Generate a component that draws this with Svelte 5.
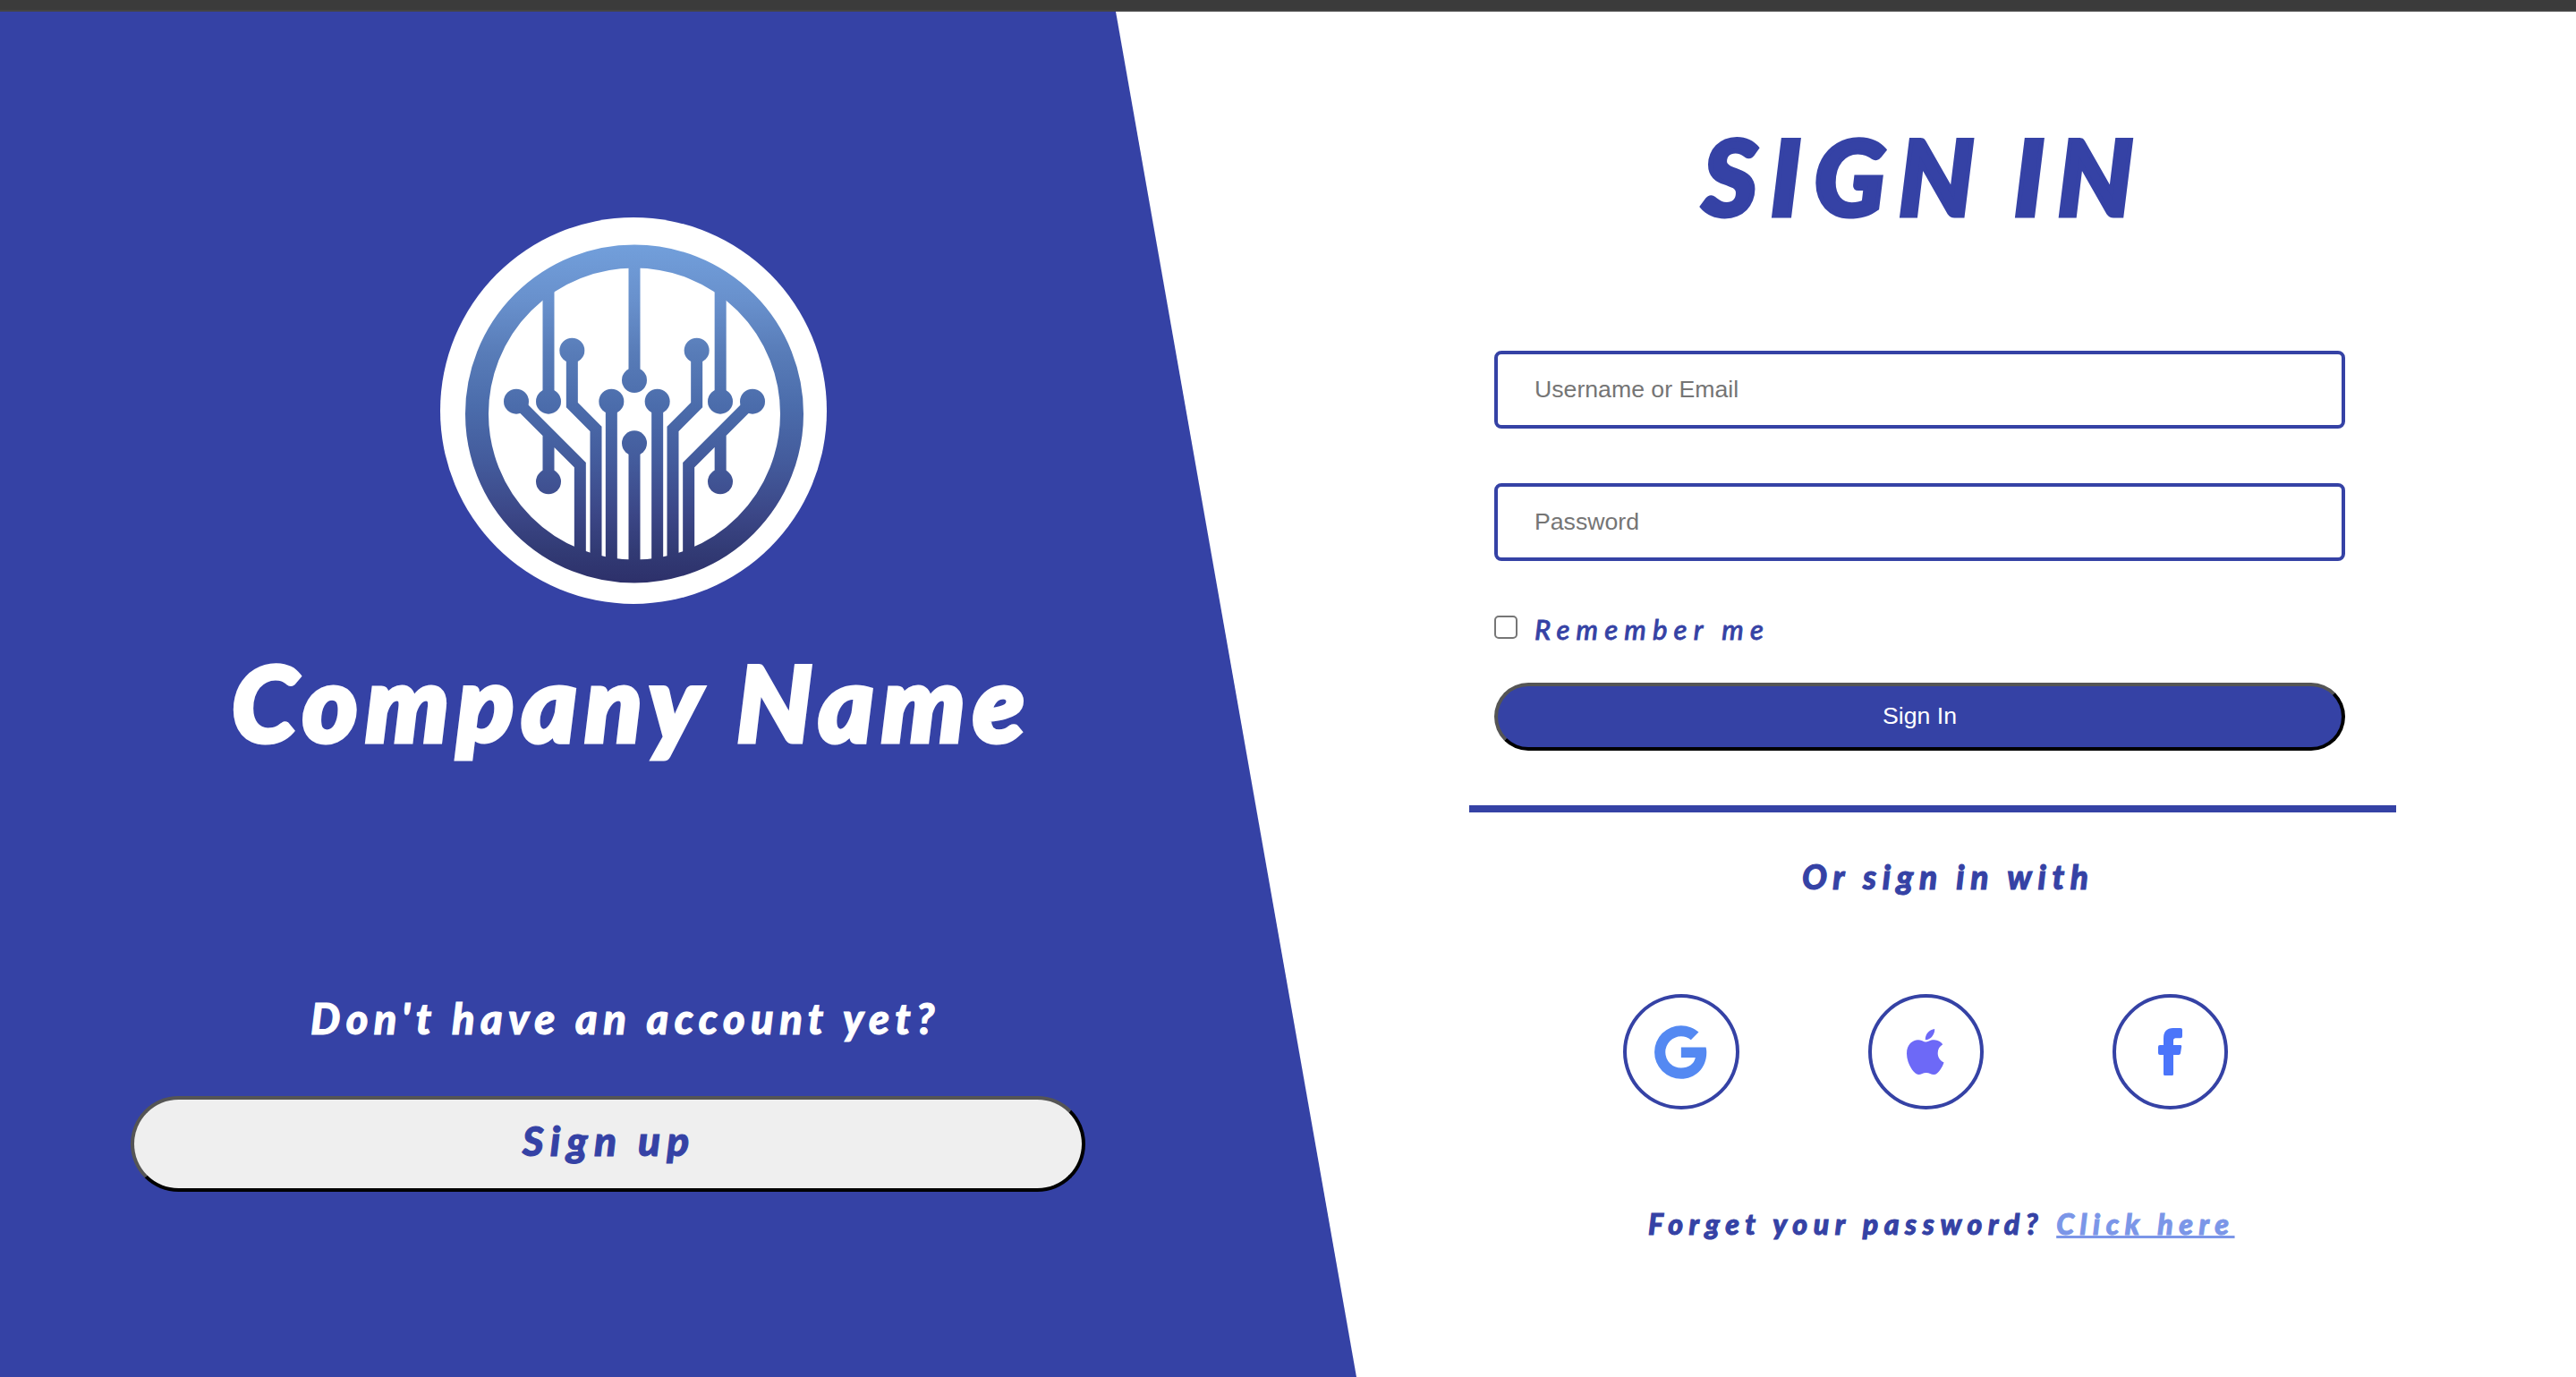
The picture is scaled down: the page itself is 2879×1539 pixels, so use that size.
<script>
  let username = $state('');
  let password = $state('');
  let remember = $state(false);

  const traces = [
    'M399 240V656',
    'M687 180V585',
    'M975.5 240V656',
    'M478 485V668L558 748V1190',
    'M896 485V668L816 748V1190',
    'M610 656V1210',
    'M764 656V1210',
    'M687 795V1210',
    'M292 656L505 869V1170',
    'M1082 656L869 869V1170',
    'M399 770V925',
    'M975.5 770V925'
  ];
  const nodes = [
    [478, 485], [896, 485], [687, 585], [291, 656], [399, 656], [975, 656],
    [1083, 656], [610, 656], [764, 656], [687, 796], [399, 925], [975, 925]
  ];
  const providers = [
    {
      name: 'google',
      label: 'Google',
      box: '0 0 24 24',
      path: 'M20.283 10.356h-8.327v3.451h4.792c-.446 2.193-2.313 3.453-4.792 3.453a5.27 5.27 0 0 1-5.279-5.28 5.27 5.27 0 0 1 5.279-5.279c1.259 0 2.397.447 3.29 1.178l2.6-2.599c-1.584-1.381-3.615-2.233-5.89-2.233a8.908 8.908 0 0 0-8.934 8.934 8.907 8.907 0 0 0 8.934 8.934c4.467 0 8.529-3.249 8.529-8.934 0-.528-.081-1.097-.202-1.625z'
    },
    {
      name: 'apple',
      label: 'Apple',
      box: '4 32 376 448',
      path: 'M318.7 268.7c-.2-36.7 16.4-64.4 50-84.8-18.8-26.9-47.2-41.7-84.7-44.6-35.5-2.8-74.3 20.7-88.5 20.7-15 0-49.4-19.7-76.4-19.7C63.3 141.2 4 184.8 4 273.5q0 39.3 14.4 81.2c12.8 36.7 59 126.7 107.2 125.2 25.2-.6 43-17.9 75.8-17.9 31.8 0 48.3 17.9 76.4 17.9 48.6-.7 90.4-82.5 102.6-119.3-65.2-30.7-61.7-90-61.7-91.9zm-56.6-164.2c27.3-32.4 24.8-61.9 24-72.5-24.1 1.4-52 16.4-67.9 34.9-17.5 19.8-27.8 44.3-25.6 71.9 26.1 2 49.9-11.4 69.5-34.2z'
    },
    {
      name: 'facebook',
      label: 'Facebook',
      box: '186 147 81 160',
      path: 'M236 147H261q6 0 6 6V175q0 6-6 6H245q-8 0-8 8V204H260q5 0 4.500 5L261 232q-1 5-6 5H237V301q0 6-6 6H210q-6 0-6-6V237H192q-6 0-6-6V210q0-6 6-6H204V182Q204 147 236 147Z'
    }
  ];
</script>

<div class="page">
  <div class="topbar"></div>
  <main class="split">
    <section class="brand">
      <svg class="logo" viewBox="36 39 1296 1296" aria-hidden="true">
        <defs>
          <linearGradient id="ink" gradientUnits="userSpaceOnUse" x1="687" y1="130" x2="687" y2="1265">
            <stop offset="0" stop-color="#729fdb" />
            <stop offset="0.17" stop-color="#6890cc" />
            <stop offset="0.32" stop-color="#587cb8" />
            <stop offset="0.48" stop-color="#4b6cab" />
            <stop offset="0.65" stop-color="#435a9b" />
            <stop offset="0.8" stop-color="#3b4686" />
            <stop offset="0.9" stop-color="#323b75" />
            <stop offset="1" stop-color="#2d306a" />
          </linearGradient>
        </defs>
        <circle cx="684" cy="687" r="648" fill="#fff" />
        <g fill="none" stroke="url(#ink)">
          <circle cx="687" cy="697.5" r="528" stroke-width="78" />
          <path d={traces.join('')} stroke-width="39" />
        </g>
        <g fill="url(#ink)">
          {#each nodes as [x, y]}
            <circle cx={x} cy={y} r="42" />
          {/each}
        </g>
      </svg>
      <h1 class="company">Company Name</h1>
      <p class="question">Don't have an account yet?</p>
      <button class="signup">Sign up</button>
    </section>

    <section class="panel">
      <h2 class="title">SIGN IN</h2>
      <form class="form" onsubmit={(e) => e.preventDefault()}>
        <input class="field" type="text" placeholder="Username or Email" bind:value={username} />
        <input class="field" type="password" placeholder="Password" bind:value={password} />
        <label class="remember">
          <input class="check" type="checkbox" bind:checked={remember} />
          <span>Remember me</span>
        </label>
        <button class="signin">Sign In</button>
      </form>
      <div class="divider"></div>
      <p class="or">Or sign in with</p>
      <div class="providers">
        {#each providers as p}
          <button class="provider {p.name}" aria-label={p.label}>
            <svg viewBox={p.box} preserveAspectRatio="none"><path d={p.path} /></svg>
          </button>
        {/each}
      </div>
      <p class="forgot">
        <span>Forget your password?</span>
        <a href="#reset">Click here</a>
      </p>
    </section>
  </main>
</div>

<style>
  :global(body) {
    margin: 0;
    overflow: hidden;
  }
  .page {
    --blue: #3542a5;
    display: flex;
    flex-direction: column;
    width: 2879px;
    height: 1539px;
    background: #fff;
    color: var(--blue);
    font-family: Lato, 'Open Sans', sans-serif;
    font-style: italic;
    font-weight: 900;
  }
  .topbar {
    box-sizing: border-box;
    height: 13px;
    flex: none;
    background: #3b3b3b;
    border-bottom: 2px solid #444;
  }
  .split {
    flex: 1;
    display: grid;
    grid-template-columns: 1516px 1fr;
  }
  h1, h2, p {
    margin: 0;
    font-weight: 900;
    white-space: nowrap;
  }
  /* Thickens and rounds the display lettering */
  h1, h2 {
    -webkit-text-stroke: 5px currentColor;
    stroke-linejoin: round;
  }
  p, .signup {
    -webkit-text-stroke: 1px currentColor;
  }
  button {
    box-sizing: border-box;
    padding: 0;
    cursor: pointer;
  }
  .brand, .panel {
    display: flex;
    flex-direction: column;
    align-items: flex-start;
  }
  .brand {
    padding: 230px 0 0 146px;
    background: var(--blue);
    color: #fff;
    clip-path: polygon(0 0, 1247px 0, 100% 100%, 0 100%);
  }
  .logo {
    width: 432px;
    height: 432px;
    margin-left: 346px;
  }
  .company {
    margin: 37px 0 0 113px;
    font-size: 117px;
    line-height: 144px;
    letter-spacing: 9px;
  }
  .question {
    margin: 254px 0 0 201px;
    font-size: 47px;
    line-height: 56px;
    letter-spacing: 6.4px;
  }
  .signup, .signin {
    border: 4px solid;
    border-color: #555 #000 #000 #555;
    border-radius: 60px;
  }
  .signup {
    width: 1067px;
    height: 107px;
    margin-top: 59px;
    padding: 0 0 9px 2px;
    background: #efefef;
    color: var(--blue);
    font: inherit;
    font-size: 46px;
    letter-spacing: 7.1px;
  }
  .panel {
    padding: 110px 0 0 126px;
  }
  .title {
    margin-left: 261px;
    font-size: 117px;
    line-height: 147px;
    letter-spacing: 15px;
    word-spacing: -10px;
  }
  .form {
    display: flex;
    flex-direction: column;
    width: 951px;
    margin: 122px 0 0 28px;
  }
  .field {
    box-sizing: border-box;
    height: 87px;
    margin: 0 0 61px;
    padding: 0 41px 1px;
    border: 4px solid var(--blue);
    border-radius: 8px;
    outline: none;
    background: #fff;
    color: #222;
    font: 26.667px 'Liberation Sans', Arial, sans-serif;
  }
  .field::placeholder {
    color: #757575;
    opacity: 1;
  }
  .remember {
    display: flex;
    align-items: flex-start;
    height: 26px;
    font-size: 31px;
    font-weight: 500;
    line-height: 31px;
    letter-spacing: 7.200px;
    white-space: nowrap;
    -webkit-text-stroke: 0.8px currentColor;
  }
  .check {
    appearance: none;
    box-sizing: border-box;
    width: 26px;
    height: 26px;
    margin: 0 19px 0 0;
    border: 2px solid #767676;
    border-radius: 5px;
    background: #fff;
  }
  .check:checked {
    background: var(--blue);
  }
  .signin {
    height: 76px;
    margin-top: 49px;
    padding-bottom: 2px;
    background: var(--blue);
    color: #fff;
    font: 26.667px 'Liberation Sans', Arial, sans-serif;
  }
  .divider {
    width: 1036px;
    height: 8px;
    margin-top: 61px;
    background: var(--blue);
  }
  .or {
    margin: 50px 0 0 372px;
    font-size: 37px;
    line-height: 44px;
    letter-spacing: 6.600px;
  }
  .providers {
    display: flex;
    gap: 144.500px;
    margin: 109px 0 0 172px;
  }
  .provider {
    display: flex;
    align-items: center;
    justify-content: center;
    width: 129px;
    height: 129px;
    border: 4px solid var(--blue);
    border-radius: 50%;
    background: #fff;
  }
  .provider svg {
    display: block;
    flex: none;
  }
  .google {
    width: 130px;
    margin-right: -1px;
  }
  .google svg {
    width: 80px;
    height: 80px;
    fill: #5489f2;
  }
  .apple svg {
    width: 41.500px;
    height: 51px;
    fill: #6d69f7;
  }
  .facebook svg {
    width: 27px;
    height: 53.300px;
    fill: #4b75fa;
  }
  .forgot {
    display: flex;
    gap: 14px;
    margin: 109px 0 0 200px;
    font-size: 32px;
    line-height: 38px;
    letter-spacing: 6.600px;
  }
  .forgot a {
    color: #7b96e8;
    text-decoration: underline;
    text-decoration-thickness: 3px;
    text-decoration-skip-ink: none;
    text-underline-offset: 1px;
  }
</style>
